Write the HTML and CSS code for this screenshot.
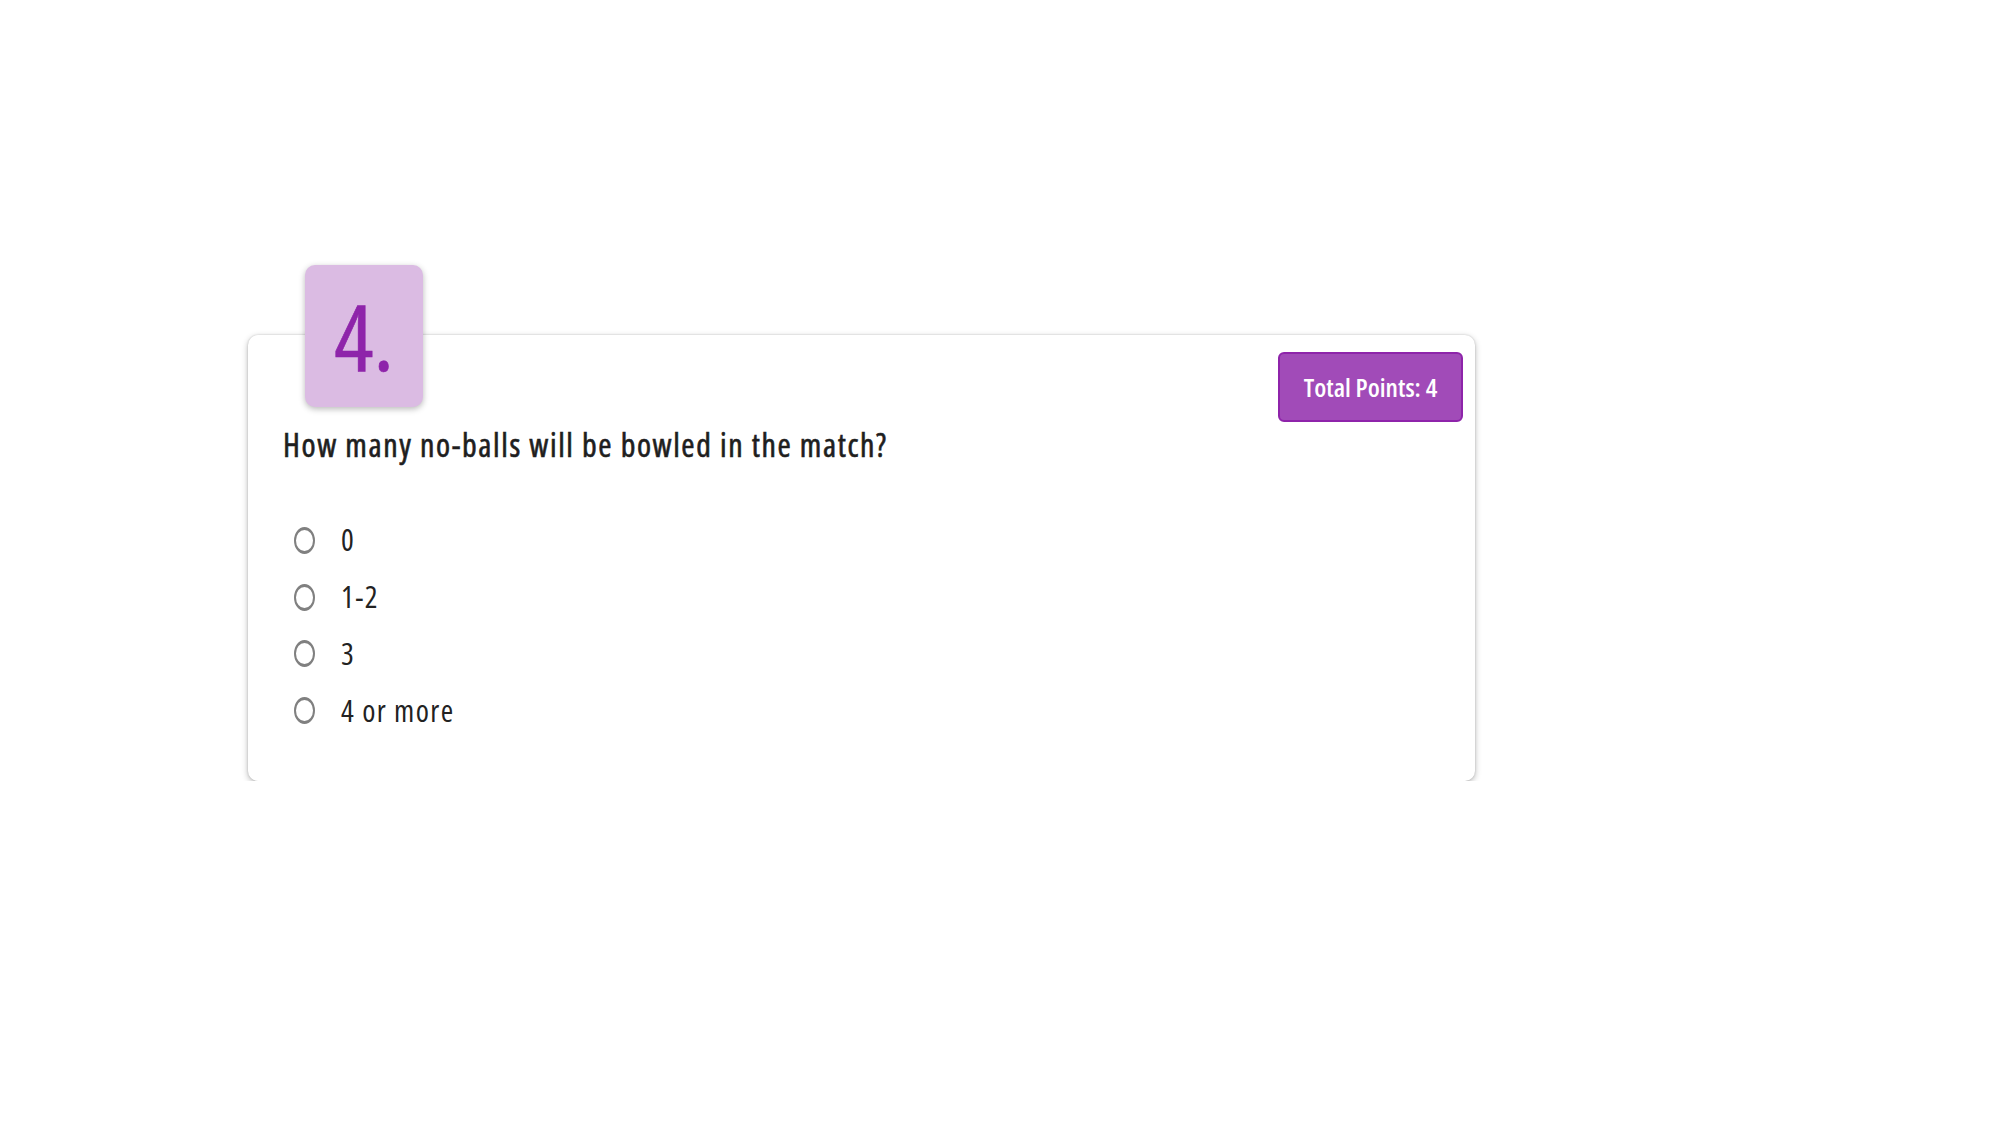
FILE: index.html
```html
<!DOCTYPE html>
<html lang="en">
<head>
<meta charset="utf-8">
<title>Question 4</title>
<link rel="stylesheet" href="styles.css">
</head>
<body>
<div class="page">
  <div class="card">
    <div class="badge">4.</div>
    <div class="card-head">
      <div class="points">Total Points: 4</div>
    </div>
    <div class="question">How many no-balls will be bowled in the match?</div>
    <div class="options">
      <label class="option"><span class="radio"></span><span class="opt-text">0</span></label>
      <label class="option"><span class="radio"></span><span class="opt-text">1-2</span></label>
      <label class="option"><span class="radio"></span><span class="opt-text">3</span></label>
      <label class="option"><span class="radio"></span><span class="opt-text">4 or more</span></label>
    </div>
  </div>
</div>
</body>
</html>
```
FILE: styles.css
```css
html, body {
  margin: 0;
  padding: 0;
  background: #ffffff;
}
body {
  font-family: "Open Sans", "Liberation Sans", sans-serif;
  font-stretch: 75%;
  color: #222222;
}
.page {
  padding: 335px 0 0 248px;
}
.card {
  position: relative;
  box-sizing: border-box;
  width: 1227px;
  height: 446px;
  background: #ffffff;
  border-radius: 10px;
  box-shadow: 0 2px 6px rgba(0, 0, 0, 0.28), 0 0 2px rgba(0, 0, 0, 0.18);
  padding: 17px 12px 0 35px;
}
.badge {
  position: absolute;
  top: -70px;
  left: 57px;
  width: 118px;
  height: 142px;
  border-radius: 10px;
  background: #dbbbe3;
  box-shadow: 0 2px 6px rgba(0, 0, 0, 0.28);
  display: flex;
  align-items: center;
  justify-content: center;
  color: #8e24aa;
  font-size: 92px;
  line-height: 1;
  font-weight: 400;
  -webkit-text-stroke: 0.6px #8e24aa;
}
.card-head {
  display: flex;
  justify-content: flex-end;
}
.points {
  box-sizing: border-box;
  width: 185px;
  height: 70px;
  border: 2px solid #8e24aa;
  border-radius: 6px;
  background: #a14bb8;
  color: #ffffff;
  font-size: 26px;
  font-weight: 600;
  display: flex;
  align-items: center;
  justify-content: center;
}
.question {
  margin-top: 4px;
  font-size: 32px;
  line-height: 38px;
  font-weight: 400;
  letter-spacing: 1.6px;
  -webkit-text-stroke: 0.6px #1e1e1e;
  color: #1e1e1e;
}
.options {
  margin-top: 48px;
  padding-left: 11px;
  display: flex;
  flex-direction: column;
}
.option {
  display: flex;
  align-items: center;
  height: 56.8px;
}
.radio {
  box-sizing: border-box;
  width: 21px;
  height: 27px;
  border: 2px solid #808080;
  border-top-width: 3px;
  border-bottom-width: 3px;
  border-radius: 50%;
  margin-right: 26px;
}
.opt-text {
  font-size: 30px;
  line-height: 40px;
  letter-spacing: 1.4px;
  color: #222222;
}
```
